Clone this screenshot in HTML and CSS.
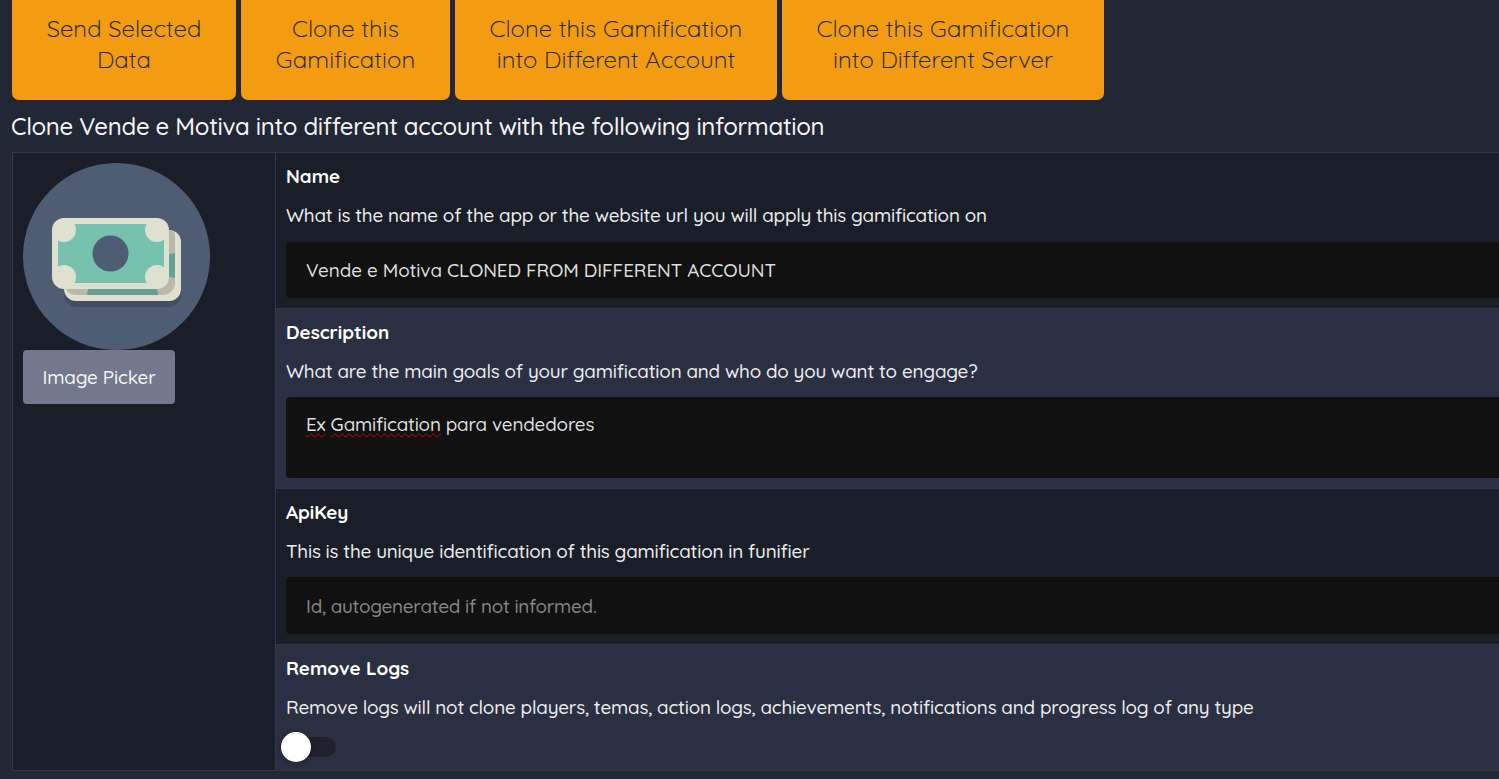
FILE: index.html
```html
<!DOCTYPE html>
<html lang="en">
<head>
<meta charset="utf-8">
<title>Clone Gamification</title>
<link rel="stylesheet" href="styles.css">
</head>
<body>
<nav class="actions">
  <button class="action action-send"><span>Send Selected</span><span>Data</span></button>
  <button class="action action-clone"><span>Clone this</span><span>Gamification</span></button>
  <button class="action action-wide"><span>Clone this Gamification</span><span>into Different Account</span></button>
  <button class="action action-wide"><span>Clone this Gamification</span><span>into Different Server</span></button>
</nav>
<h1 class="title"><span>Clone Vende e Motiva into different account with the following information</span></h1>
<main class="panel">
  <aside class="picture">
    <svg class="avatar" viewBox="0 0 187 187" width="187" height="187">
      <defs>
        <clipPath id="back"><rect x="41" y="67" width="117" height="71" rx="12"/></clipPath>
        <clipPath id="front"><rect x="35" y="61" width="106" height="59"/></clipPath>
      </defs>
      <circle cx="93.500" cy="93.500" r="93.500" fill="#4f5d73"/>
      <rect x="41" y="73" width="117" height="71" rx="12" fill="#435064"/>
      <g clip-path="url(#back)">
        <rect x="41" y="67" width="117" height="71" fill="#e0e0d1"/>
        <rect x="41" y="61" width="111" height="71" rx="12" fill="#b9b8ab"/>
        <path d="M64 132Q64 128 66 124H133Q135 128 135 132ZM145 91Q148 91 152 90V115Q148 114 145 114Z" fill="#65a192"/>
      </g>
      <rect x="29" y="55" width="117" height="71" rx="12" fill="#e0e0d1"/>
      <rect x="35" y="61" width="106" height="59" fill="#76c2af"/>
      <g fill="#e0e0d1" clip-path="url(#front)">
        <circle cx="41" cy="67" r="12"/><circle cx="134" cy="67" r="12"/>
        <circle cx="41" cy="114" r="12"/><circle cx="134" cy="114" r="12"/>
      </g>
      <circle cx="87.500" cy="90.500" r="18" fill="#4f5d73"/>
    </svg>
    <button class="picker"><span>Image Picker</span></button>
  </aside>
  <section class="fields">
    <div class="row row-name">
      <h2>Name</h2>
      <p>What is the name of the app or the website url you will apply this gamification on</p>
      <div class="input">Vende e Motiva CLONED FROM DIFFERENT ACCOUNT</div>
    </div>
    <div class="row row-desc alt">
      <h2>Description</h2>
      <p>What are the main goals of your gamification and who do you want to engage?</p>
      <div class="input area"><span class="typo">Ex</span> <span class="typo">Gamification</span> para vendedores</div>
    </div>
    <div class="row row-key">
      <h2>ApiKey</h2>
      <p>This is the unique identification of this gamification in funifier</p>
      <div class="input hint">Id, autogenerated if not informed.</div>
    </div>
    <div class="row row-logs alt">
      <h2>Remove Logs</h2>
      <p>Remove logs will not clone players, temas, action logs, achievements, notifications and progress log of any type</p>
      <div class="switch"><i class="knob"></i></div>
    </div>
  </section>
</main>
</body>
</html>
```
FILE: styles.css
```css
* { box-sizing: border-box; }
html { height: 100%; overflow: hidden; }
body {
  margin: 0; width: 1499px; height: 779px; overflow: hidden;
  background: #222736; color: #ebecee;
  font: 500 18.85px/28px Quicksand, Lato, sans-serif;
}
span { white-space: nowrap; }
.actions { display: flex; gap: 5px; height: 100px; padding-left: 12px; }
.action {
  height: 100px; padding: 13px 0 0; border: 0; border-radius: 0 0 7px 7px;
  background: #f39c12; color: #222736; display: flex; flex-direction: column; align-items: center;
  font: 300 24px/31px Quicksand, Lato, sans-serif; letter-spacing: 0.09px;
  -webkit-text-stroke: 0.2px #222736;
}
.action-send { width: 224px; }
.action-clone { width: 209px; }
.action-wide { width: 322px; }
.title { margin: 0; padding: 11px 0 0 11px; height: 52px; font-size: 24px; font-weight: 500; line-height: 31px; letter-spacing: -0.32px; color: #f4f4f6; }
.panel { display: flex; width: 1520px; height: 619px; margin-left: 12px; border: 1px solid #30364e; background: #1a1e28; }
.picture { width: 262px; padding: 10px; }
.avatar { display: block; }
.picker {
  width: 152px; height: 54px; padding: 0; border: 0; border-radius: 4px;
  background: #74788d; color: #f4f4f6; font: 500 18.85px/54px Quicksand, Lato, sans-serif; letter-spacing: -0.12px;
}
.fields { flex: 1; border-left: 1px solid #30364e; }
.row { padding: 9px 10px 0; border-bottom: 1px solid #30364e; }
.row-name { height: 156px; }
.row-desc { height: 180px; }
.row-key { height: 156px; }
.row-logs { height: 125px; border-bottom: 0; }
.alt { background: #2b2f42; }
h2 { margin: 0 0 11px; font-size: 18.85px; line-height: 28px; font-weight: 700; color: #fff; }
p { margin: 0 0 13px; line-height: 28px; letter-spacing: -0.197px; }
.input { height: 56px; padding: 0 20px; border-radius: 4px; background: #111; color: #ddd; line-height: 56px; letter-spacing: -0.1px; }
.area { height: 81px; line-height: 54px; margin-top: -1px; letter-spacing: -0.2px; }
.hint { height: 57px; margin-top: -1px; color: #858585; line-height: 58px; letter-spacing: -0.25px; }
.typo { text-decoration: underline wavy #d00000 1.3px; text-decoration-skip-ink: none; text-underline-offset: 2px; }
.row-logs p { margin-bottom: 16px; }
.switch { width: 50px; height: 20px; border-radius: 10px; background: #1f222d; }
.knob { display: block; width: 30px; height: 30px; border-radius: 50%; background: #fff; position: relative; left: -5px; top: -5px; box-shadow: 0 1px 5px rgba(0,0,0,.3); }
```
